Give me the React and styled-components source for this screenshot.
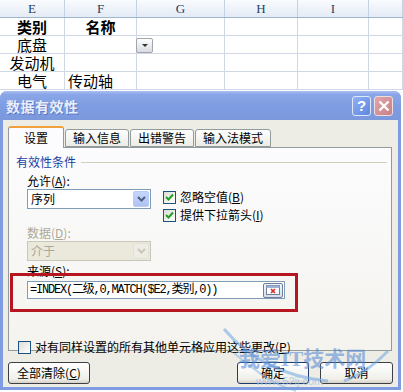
import React from 'react'
import styled, { createGlobalStyle } from 'styled-components'

const GlobalStyle = createGlobalStyle`
  html, body {
    margin: 0;
    padding: 0;
    background: #c5c9d2;
    overflow: hidden;
  }
  * { box-sizing: border-box; }
`

const CJK = `"Noto Sans CJK SC", "Noto Sans", sans-serif`

const columns = [
  { key: 'E', width: 65 },
  { key: 'F', width: 72 },
  { key: 'G', width: 88 },
  { key: 'H', width: 73 },
  { key: 'I', width: 71 },
  { key: '', width: 34 },
]

const rows = [
  [{ text: '类别', bold: true }, { text: '名称', bold: true }],
  [{ text: '底盘' }, { text: '' }, { dropdown: true }],
  [{ text: '发动机' }],
  [{ text: '电气' }, { text: '传动轴', left: true }],
]

function Check() {
  return (
    <svg width="9" height="9" viewBox="0 0 9 9">
      <path d="M1 4 L3.5 6.5 L8 1.5" stroke="#21a121" strokeWidth="2" fill="none" />
    </svg>
  )
}

function Chevron({ color }) {
  return (
    <svg width="9" height="6" viewBox="0 0 9 6">
      <path d="M1 1 L4.5 4.5 L8 1" stroke={color} strokeWidth="2" fill="none" />
    </svg>
  )
}

function App() {
  return (
    <Page>
      <GlobalStyle />
      <Sheet>
        <HeaderRow>
          {columns.map((c, i) => (
            <HeadCell key={i} w={c.width}>{c.key}</HeadCell>
          ))}
        </HeaderRow>
        {rows.map((r, ri) => (
          <Row key={ri}>
            {columns.map((c, ci) => {
              const cell = r[ci] || {}
              return (
                <Cell key={ci} w={c.width} bold={cell.bold} left={cell.left}>
                  {cell.dropdown ? <CellDrop><Tri /></CellDrop> : cell.text}
                </Cell>
              )
            })}
          </Row>
        ))}
      </Sheet>

      <Dialog>
        <TitleBar>
          <Title>数据有效性</Title>
          <TitleButtons>
            <HelpBtn>?</HelpBtn>
            <CloseBtn>
              <svg width="12" height="12" viewBox="0 0 12 12">
                <path d="M1.5 1.5 L10.5 10.5 M10.5 1.5 L1.5 10.5" stroke="#fff" strokeWidth="2.4" />
              </svg>
            </CloseBtn>
          </TitleButtons>
        </TitleBar>

        <Body>
          <Tabs>
            <Tab active>设置</Tab>
            <Tab>输入信息</Tab>
            <Tab>出错警告</Tab>
            <Tab>输入法模式</Tab>
          </Tabs>

          <Panel>
            <Legend>
              <span>有效性条件</span>
              <LegendLine />
            </Legend>

            <Indent>
              <Label gap={2}>允许(<u>A</u>):</Label>
              <SelectRow>
                <Select>
                  <span>序列</span>
                  <DropBtn><Chevron color="#4d6185" /></DropBtn>
                </Select>
                <Checks>
                  <CheckRow>
                    <Box><Check /></Box>
                    <CheckText>忽略空值(<u>B</u>)</CheckText>
                  </CheckRow>
                  <CheckRow>
                    <Box><Check /></Box>
                    <CheckText>提供下拉箭头(<u>I</u>)</CheckText>
                  </CheckRow>
                </Checks>
              </SelectRow>

              <Label gap={2} disabled>数据(<u>D</u>):</Label>
              <Select disabled>
                <span>介于</span>
                <DropBtn disabled><Chevron color="#c9c7ba" /></DropBtn>
              </Select>

              <Label gap={1}>来源(<u>S</u>):</Label>
              <SourceWrap>
                <SourceInput>
                  <Formula>=INDEX(二级,0,MATCH($E2,类别,0))</Formula>
                  <RefBtn>
                    <svg width="14" height="10" viewBox="0 0 14 10">
                      <rect x="0.5" y="0.5" width="13" height="9" fill="#fff" stroke="#6f7f9a" />
                      <rect x="0.5" y="0.5" width="13" height="2.5" fill="#9fb2d8" />
                      <path d="M5 4 L9 8 M9 4 L5 8" stroke="#d42b2b" strokeWidth="1.6" />
                    </svg>
                  </RefBtn>
                </SourceInput>
              </SourceWrap>
            </Indent>

            <ApplyRow>
              <Box />
              <CheckText>对有同样设置的所有其他单元格应用这些更改(<u>P</u>)</CheckText>
            </ApplyRow>
          </Panel>

          <Footer>
            <Button w={82}>全部清除(<u>C</u>)</Button>
            <Spacer />
            <Button w={72} dark>确定</Button>
            <Button w={73}>取消</Button>
          </Footer>

          <Watermark>
            <svg width="175" height="70" viewBox="0 0 175 70">
              <path d="M8 4 C35 36 70 52 112 56" stroke="#6fa4e0" strokeWidth="3" fill="none" opacity="0.55" />
              <path d="M18 28 C42 48 58 60 80 66" stroke="#6fa4e0" strokeWidth="2" fill="none" opacity="0.45" />
              <path d="M172 26 C156 42 144 50 128 56" stroke="#6fa4e0" strokeWidth="3" fill="none" opacity="0.55" />
            </svg>
            <WmText>我爱IT技术网</WmText>
            <WmSub>www.52ij.com</WmSub>
          </Watermark>
        </Body>
      </Dialog>
    </Page>
  )
}

export default App

const Page = styled.div`
  position: relative;
  width: 403px;
  height: 392px;
  overflow: hidden;
  background: #ffffff;
`

const Sheet = styled.div`
  display: flex;
  flex-direction: column;
  background: #fff;
`

const HeaderRow = styled.div`
  display: flex;
  height: 18px;
  background: linear-gradient(#f9fbfd, #e4ebf5);
  border-bottom: 1px solid #9eb6ce;
`

const HeadCell = styled.div`
  flex: 0 0 ${p => p.w}px;
  border-right: 1px solid #c3d1e2;
  display: flex;
  align-items: center;
  justify-content: center;
  font-family: "Liberation Serif", serif;
  font-size: 13px;
  line-height: 17px;
  color: #27415f;
`

const Row = styled.div`
  display: flex;
  height: 18px;
  border-bottom: 1px solid #d0d7e5;
`

const Cell = styled.div`
  flex: 0 0 ${p => p.w}px;
  border-right: 1px solid #d0d7e5;
  display: flex;
  align-items: center;
  justify-content: ${p => (p.left ? 'flex-start' : 'center')};
  padding-left: ${p => (p.left ? '3px' : '0')};
  font-family: ${CJK};
  font-size: 15px;
  font-weight: ${p => (p.bold ? 700 : 400)};
  line-height: 17px;
  color: #000;
  white-space: nowrap;
`

const CellDrop = styled.div`
  align-self: flex-end;
  margin-right: auto;
  margin-left: -1px;
  width: 17px;
  height: 15px;
  border: 1px solid #a1a5ad;
  border-radius: 2px;
  background: linear-gradient(#fdfdfd, #d9dce2);
  display: flex;
  align-items: center;
  justify-content: center;
`

const Tri = styled.span`
  width: 0;
  height: 0;
  border-left: 3px solid transparent;
  border-right: 3px solid transparent;
  border-top: 3px solid #333;
`

const Dialog = styled.div`
  margin-top: 1px;
  width: 401px;
  display: flex;
  flex-direction: column;
  background: #7f9ce2;
  border-radius: 7px 7px 0 0;
  padding: 0 3px 3px 3px;
`

const TitleBar = styled.div`
  height: 29px;
  display: flex;
  align-items: center;
  justify-content: space-between;
  padding: 0 3px;
  margin: 0 -3px;
  border-radius: 7px 7px 0 0;
  background: linear-gradient(#a9bff0 0%, #8aa6e8 12%, #7f9de2 50%, #7b98dd 100%);
`

const Title = styled.div`
  font-family: ${CJK};
  font-size: 14px;
  line-height: 18px;
  font-weight: 700;
  color: #e9eefb;
  text-shadow: 1px 1px 0 #5f7ac4;
  padding-left: 3px;
  letter-spacing: 0.5px;
`

const TitleButtons = styled.div`
  display: flex;
  gap: 3px;
  padding-right: 5px;
`

const HelpBtn = styled.div`
  width: 19px;
  height: 20px;
  border: 1px solid #dfe7fa;
  border-radius: 3px;
  background: linear-gradient(135deg, #8fb0f3, #5f86e0);
  color: #fff;
  font-family: "Liberation Sans", sans-serif;
  font-weight: 700;
  font-size: 15px;
  line-height: 18px;
  display: flex;
  align-items: center;
  justify-content: center;
`

const CloseBtn = styled.div`
  width: 19px;
  height: 20px;
  border: 1px solid #efdcdf;
  border-radius: 3px;
  background: linear-gradient(135deg, #e0a7ab, #c98085);
  display: flex;
  align-items: center;
  justify-content: center;
`

const Body = styled.div`
  position: relative;
  background: #eeede5;
  padding: 6px 5px 0 5px;
  display: flex;
  flex-direction: column;
  height: 267px;
`

const Tabs = styled.div`
  display: flex;
  align-items: flex-end;
  height: 21px;
  gap: 1px;
  position: relative;
  z-index: 1;
`

const Tab = styled.div`
  height: ${p => (p.active ? '22px' : '18px')};
  margin-bottom: ${p => (p.active ? '-1px' : '0')};
  padding: 0 ${p => (p.active ? '15px' : '7px')};
  display: flex;
  align-items: center;
  font-family: ${CJK};
  font-size: 12px;
  line-height: 14px;
  color: #000;
  border: 1px solid #919b9c;
  border-bottom: ${p => (p.active ? 'none' : '1px solid #919b9c')};
  border-top: ${p => (p.active ? '2px solid #f0a13c' : '1px solid #919b9c')};
  border-radius: 3px 3px 0 0;
  background: ${p => (p.active ? '#fcfcfe' : 'linear-gradient(#ffffff, #ecebe5)')};
`

const Panel = styled.div`
  width: 384px;
  height: 204px;
  border: 1px solid #919b9c;
  background: linear-gradient(#fcfcfe, #f4f3ee);
  padding: 6px 4px 0 7px;
  display: flex;
  flex-direction: column;
`

const Legend = styled.div`
  display: flex;
  align-items: center;
  gap: 5px;
  font-family: ${CJK};
  font-size: 12px;
  line-height: 16px;
  color: #1a3ea6;
  height: 16px;
`

const LegendLine = styled.div`
  flex: 1;
  height: 1px;
  background: #d0d0bf;
`

const Indent = styled.div`
  padding-left: 11px;
  display: flex;
  flex-direction: column;
`

const Label = styled.div`
  font-family: ${CJK};
  font-size: 12px;
  height: 17px;
  line-height: 17px;
  margin-top: ${p => p.gap}px;
  color: ${p => (p.disabled ? '#aca899' : '#000')};
  u { text-underline-offset: 1px; }
`

const SelectRow = styled.div`
  display: flex;
  gap: 12px;
`

const Select = styled.div`
  width: 124px;
  height: 20px;
  flex: 0 0 auto;
  border: 1px solid ${p => (p.disabled ? '#c9c7ba' : '#7f9db9')};
  background: ${p => (p.disabled ? '#ebe9db' : '#fff')};
  display: flex;
  align-items: center;
  justify-content: space-between;
  padding: 1px 1px 1px 3px;
  font-family: ${CJK};
  font-size: 12px;
  line-height: 16px;
  color: ${p => (p.disabled ? '#aca899' : '#000')};
`

const DropBtn = styled.div`
  width: 16px;
  height: 100%;
  border: 1px solid ${p => (p.disabled ? '#e3e1d5' : '#b9cbf5')};
  border-radius: 2px;
  background: ${p => (p.disabled ? '#eeede5' : 'linear-gradient(#c6d6fb, #aec2f3)')};
  display: flex;
  align-items: center;
  justify-content: center;
`

const Checks = styled.div`
  display: flex;
  flex-direction: column;
  gap: 4px;
  padding-top: 1px;
`

const CheckRow = styled.div`
  display: flex;
  align-items: center;
  gap: 4px;
  height: 14px;
`

const Box = styled.div`
  width: 13px;
  height: 13px;
  flex: 0 0 13px;
  border: 1px solid #1c5180;
  background: linear-gradient(135deg, #dcdcd7, #ffffff);
  display: flex;
  align-items: center;
  justify-content: center;
`

const CheckText = styled.div`
  font-family: ${CJK};
  font-size: 12px;
  line-height: 14px;
  color: #000;
  white-space: nowrap;
`

const SourceWrap = styled.div`
  position: relative;
  margin-top: 2px;
  &::before {
    content: '';
    position: absolute;
    left: -17px;
    top: -8px;
    width: 282px;
    height: 33px;
    border: 3px solid #b5161f;
  }
`

const SourceInput = styled.div`
  position: relative;
  width: 258px;
  height: 18px;
  border: 1px solid #7f9db9;
  background: #fff;
  display: flex;
  align-items: center;
  justify-content: space-between;
  padding: 0 1px 0 2px;
`

const Formula = styled.div`
  font-family: "Liberation Mono", "Noto Sans CJK SC", monospace;
  font-size: 12px;
  line-height: 14px;
  letter-spacing: -1.2px;
  color: #000;
  white-space: nowrap;
`

const RefBtn = styled.div`
  width: 20px;
  height: 15px;
  border: 1px solid #6f7f9a;
  border-radius: 2px;
  background: linear-gradient(#f4f6fb, #d7dde9);
  display: flex;
  align-items: center;
  justify-content: center;
`

const ApplyRow = styled.div`
  display: flex;
  align-items: center;
  gap: 4px;
  height: 17px;
  margin-top: 41px;
  padding-left: 2px;
`

const Footer = styled.div`
  display: flex;
  align-items: center;
  margin-top: 11px;
  gap: 11px;
`

const Spacer = styled.div`
  flex: 1;
`

const Button = styled.div`
  width: ${p => p.w}px;
  height: 22px;
  border: 1px solid ${p => (p.dark ? '#1c3c6c' : '#3b3f46')};
  border-radius: 3px;
  background: linear-gradient(#ffffff, #f0f0ea 80%, #d6d0c5);
  display: flex;
  align-items: center;
  justify-content: center;
  font-family: ${CJK};
  font-size: 12px;
  line-height: 16px;
  color: #000;
`

const Watermark = styled.div`
  position: absolute;
  left: 213px;
  top: 205px;
  width: 175px;
  height: 70px;
  pointer-events: none;
  svg { position: absolute; left: 0; top: 0; }
`

const WmText = styled.div`
  position: absolute;
  left: 23px;
  top: 23px;
  font-family: "Liberation Serif", "Noto Sans CJK SC", serif;
  font-weight: 700;
  font-size: 21px;
  line-height: 22px;
  color: #4f86d6;
  opacity: 0.55;
  white-space: nowrap;
`

const WmSub = styled.div`
  position: absolute;
  left: 40px;
  top: 50px;
  font-family: "Liberation Sans", sans-serif;
  font-size: 11px;
  line-height: 12px;
  color: #9cc0ea;
  opacity: 0.7;
`
